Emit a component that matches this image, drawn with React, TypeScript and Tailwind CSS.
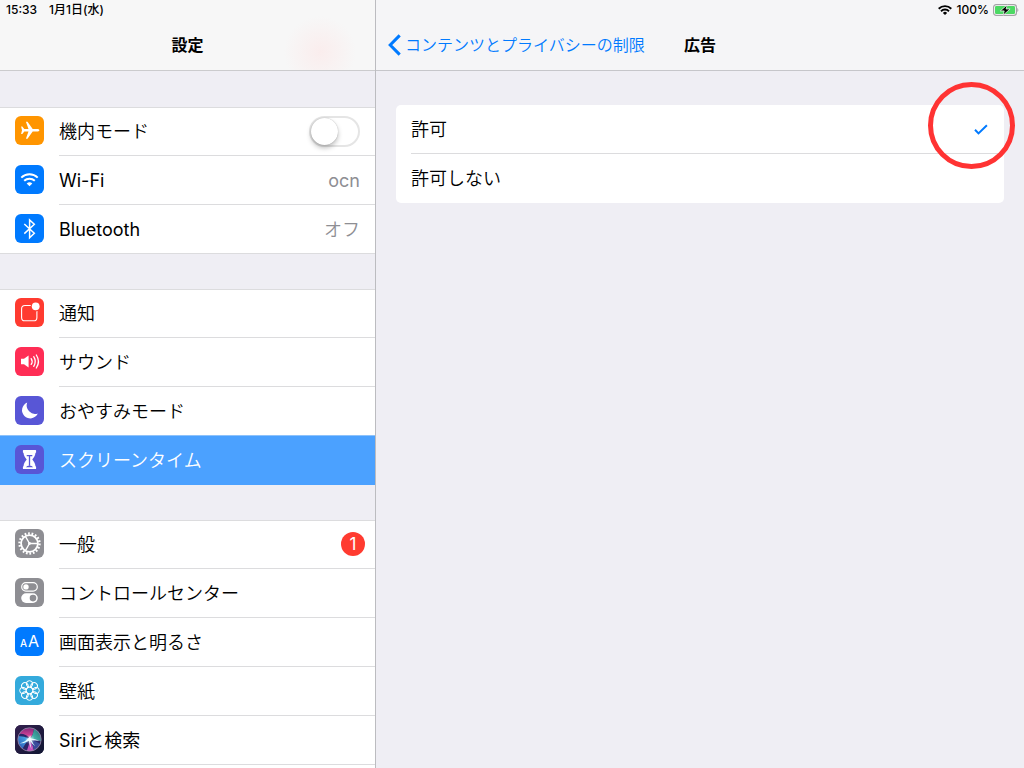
import { useState } from 'react';
import type { ReactNode } from 'react';

interface SettingItem {
  id: string;
  label: string;
  color: string;
  icon: ReactNode;
  value?: string;
  badge?: number;
  toggle?: boolean;
}

const PlaneIcon = () => (
  <svg viewBox="0 0 29 29" className="size-full" fill="#fff">
    <path d="M24.4 14.2c0 .8-1.2 1.3-2.5 1.3h-4.2l-5.2 7.2h-1.6l2.6-7.2H9.3l-2 2.5H6.1l.9-3.8-.9-3.8h1.2l2 2.5h4.2l-2.6-7.2h1.6l5.2 7.2h4.2c1.3 0 2.5.5 2.5 1.3z" />
  </svg>
);

const WifiIcon = () => (
  <svg viewBox="0 0 29 29" className="size-full" fill="none" stroke="#fff" strokeWidth="2">
    <path d="M6.3 12.6a11.8 11.8 0 0 1 16.4 0" />
    <path d="M9.2 15.8a7.8 7.8 0 0 1 10.6 0" />
    <path d="M14.5 21.3l-2.8-2.8a4 4 0 0 1 5.6 0z" fill="#fff" stroke="none" />
  </svg>
);

const BluetoothIcon = () => (
  <svg viewBox="0 0 29 29" className="size-full" fill="none" stroke="#fff" strokeWidth="1.5">
    <path d="M9.3 10l10 9.3-4.7 4.4V5.9l4.7 4.4-10 9.3" />
  </svg>
);

const NotificationIcon = () => (
  <svg viewBox="0 0 29 29" className="size-full">
    <rect x="6.6" y="7.5" width="15.3" height="15.3" rx="3.4" fill="none" stroke="#fff" strokeWidth="1.1" />
    <circle cx="20.7" cy="8.3" r="5.1" fill="#ff3b30" />
    <circle cx="20.7" cy="8.3" r="3.9" fill="#fff" />
  </svg>
);

const SoundIcon = () => (
  <svg viewBox="0 0 29 29" className="size-full" fill="none" stroke="#fff" strokeWidth="1.3" strokeLinecap="round">
    <path d="M6 11.8h3l4.6-3.3v12L9 17.2H6z" fill="#fff" stroke="none" />
    <path d="M16.2 11.6c1.2 1.8 1.2 4 0 5.8" />
    <path d="M18.7 9.7c2 3 2 6.6 0 9.6" />
    <path d="M21.3 8c2.8 4.2 2.8 8.8 0 13" />
  </svg>
);

const MoonIcon = () => (
  <svg viewBox="0 0 29 29" className="size-full" fill="#fff">
    <path d="M12.2 6.6a8.2 8.2 0 1 0 10.6 10.8A8.4 8.4 0 0 1 12.2 6.6z" />
  </svg>
);

const HourglassIcon = () => (
  <svg viewBox="0 0 29 29" className="size-full">
    <path
      d="M8.5 5h12a.6.6 0 0 1 .6.6v1.6a.6.6 0 0 1-.6.6c-.2 3-1.7 4.6-3.2 6.7 1.5 2.1 3 3.7 3.2 6.7a.6.6 0 0 1 .6.6v1.6a.6.6 0 0 1-.6.6h-12a.6.6 0 0 1-.6-.6v-1.6a.6.6 0 0 1 .6-.6c.2-3 1.7-4.6 3.2-6.7-1.5-2.1-3-3.7-3.2-6.7a.6.6 0 0 1-.6-.6V5.6a.6.6 0 0 1 .6-.6z"
      fill="#fff"
    />
    <path d="M11.7 10.6h5.6M14.5 10.6v10.2" stroke="#5856d6" strokeWidth="1.3" />
    <path d="M10.8 22.2q1.200-1.500 3.700-1.800 2.500.3 3.700 1.800z" fill="#5856d6" />
  </svg>
);

const GearIcon = () => (
  <svg viewBox="0 0 29 29" className="size-full" fill="none" stroke="#fff">
    <circle cx="14.5" cy="14.5" r="10" strokeWidth="2.4" strokeDasharray="1.745 1.745" />
    <circle cx="14.5" cy="14.5" r="8.4" strokeWidth="1.8" />
    <path d="M14.5 14.5H23M14.5 14.5l-4.2-7.3M14.5 14.5l-4.2 7.3" strokeWidth="1.4" />
    <circle cx="14.5" cy="14.5" r="1.4" fill="#fff" stroke="none" />
  </svg>
);

const ControlIcon = () => (
  <svg viewBox="0 0 29 29" className="size-full">
    <rect x="6.7" y="4.7" width="15.6" height="8.4" rx="4.2" fill="none" stroke="#fff" strokeWidth="1.2" />
    <circle cx="11" cy="8.9" r="2.7" fill="#fff" />
    <rect x="6.2" y="15.3" width="16.6" height="9.6" rx="4.8" fill="#fff" />
    <circle cx="18" cy="20.1" r="3.3" fill="#8e8e93" />
  </svg>
);

const TextSizeIcon = () => (
  <span className="flex size-full items-baseline justify-center gap-px font-['Inter'] leading-[29px] font-normal text-white">
    <span className="text-[10px] font-medium">A</span>
    <span className="text-[16px]">A</span>
  </span>
);

const FlowerIcon = () => (
  <svg viewBox="0 0 29 29" className="size-full" fill="none" stroke="#fff" strokeWidth="1">
    {[0, 45, 90, 135, 180, 225, 270, 315].map((angle) => (
      <circle key={angle} cx="14.5" cy="7.9" r="3.2" transform={`rotate(${angle} 14.5 14.5)`} />
    ))}
    <circle cx="14.5" cy="14.5" r="3.3" />
  </svg>
);

const SiriIcon = () => (
  <svg viewBox="0 0 29 29" className="size-full">
    <defs>
      <radialGradient id="siriGlow">
        <stop offset="0" stopColor="#fff" />
        <stop offset=".3" stopColor="#fff" stopOpacity=".5" />
        <stop offset="1" stopColor="#fff" stopOpacity="0" />
      </radialGradient>
      <linearGradient id="siriBg" x1="0" y1="0" x2="1" y2="1">
        <stop offset="0" stopColor="#33204f" />
        <stop offset="1" stopColor="#101632" />
      </linearGradient>
      <linearGradient id="siriPink" x1="0" y1="0" x2="0" y2="1">
        <stop offset="0" stopColor="#7a2678" />
        <stop offset="1" stopColor="#f04ea0" />
      </linearGradient>
      <linearGradient id="siriTeal" x1="1" y1="0" x2="0" y2="1">
        <stop offset="0" stopColor="#1d5560" />
        <stop offset="1" stopColor="#52d8c8" />
      </linearGradient>
      <linearGradient id="siriBlue" x1="0" y1="1" x2="1" y2="0">
        <stop offset="0" stopColor="#2448b0" />
        <stop offset="1" stopColor="#4fc0f0" />
      </linearGradient>
      <clipPath id="siriOrb">
        <circle cx="14.5" cy="14.5" r="11.5" />
      </clipPath>
    </defs>
    <rect width="29" height="29" fill="url(#siriBg)" />
    <g clipPath="url(#siriOrb)">
      <rect width="29" height="29" fill="#2a2668" />
      <path d="M15 13.500Q10 8 4 9l4-7h11q0 7-4 11.500z" fill="url(#siriPink)" />
      <path d="M15 14q4-5 4-12l10 8v8q-6-4-14-4z" fill="url(#siriTeal)" />
      <path d="M15 14Q9 11 2 11v6l5 8q3-7 8-11z" fill="url(#siriBlue)" />
      <path d="M15 14q-1 7-4 14h8q0-7-4-14z" fill="#c050b8" />
      <path d="M15 14l5 13 7-7q-6-4-12-6z" fill="#3a4c9c" />
    </g>
    <path
      d="M4.500 18.500q7-2 11-8-.5 2.500 1 3 4 .3 8 2.500-4-.8-8-.8 1.500 3.500 4 6-3.500-2-5.500-5.500.8 4.500 1.500 8.500-2.200-4-2.500-8.500-4.500 2.800-9.500 2.800z"
      fill="#d9f8ff"
    />
    <circle cx="15" cy="14.5" r="5" fill="url(#siriGlow)" />
    <circle cx="14.5" cy="14.5" r="11.7" fill="none" stroke="#9c8cae" strokeWidth=".8" />
  </svg>
);

const groups: SettingItem[][] = [
  [
    { id: 'airplane', label: '機内モード', color: 'bg-[#ff9500]', icon: <PlaneIcon />, toggle: true },
    { id: 'wifi', label: 'Wi-Fi', color: 'bg-[#007aff]', icon: <WifiIcon />, value: 'ocn' },
    { id: 'bluetooth', label: 'Bluetooth', color: 'bg-[#007aff]', icon: <BluetoothIcon />, value: 'オフ' },
  ],
  [
    { id: 'notifications', label: '通知', color: 'bg-[#ff3b30]', icon: <NotificationIcon /> },
    { id: 'sound', label: 'サウンド', color: 'bg-[#ff2d55]', icon: <SoundIcon /> },
    { id: 'dnd', label: 'おやすみモード', color: 'bg-[#5856d6]', icon: <MoonIcon /> },
    { id: 'screentime', label: 'スクリーンタイム', color: 'bg-[#5856d6]', icon: <HourglassIcon /> },
  ],
  [
    { id: 'general', label: '一般', color: 'bg-[#8e8e93]', icon: <GearIcon />, badge: 1 },
    { id: 'control', label: 'コントロールセンター', color: 'bg-[#8e8e93]', icon: <ControlIcon /> },
    { id: 'display', label: '画面表示と明るさ', color: 'bg-[#007aff]', icon: <TextSizeIcon /> },
    { id: 'wallpaper', label: '壁紙', color: 'bg-[#34aadc]', icon: <FlowerIcon /> },
    { id: 'siri', label: 'Siriと検索', color: 'bg-[#1b1638]', icon: <SiriIcon /> },
  ],
];

const options = ['許可', '許可しない'];

// Latin text looks thin next to the kana, so it gets the regular weight
const weightFor = (text: string) => (/^[A-Za-z]/.test(text) ? 'font-normal' : '');

interface RowProps {
  item: SettingItem;
  selected: boolean;
  onSelect: (id: string) => void;
}

function SettingRow({ item, selected, onSelect }: RowProps) {
  const [on, setOn] = useState(false);

  const icon = (
    <span className={`mt-[9px] size-[29px] shrink-0 self-start overflow-hidden rounded-md ${item.color}`}>
      {item.icon}
    </span>
  );
  const lineClass = selected ? 'border-[#4ba1ff]' : 'border-[#dcdcde]';

  if (item.toggle) {
    return (
      <li className="flex h-[49px] items-center gap-[15px] pl-[15px]">
        {icon}
        <label className={`flex h-full flex-1 items-center justify-between border-b pr-[15px] ${lineClass}`}>
          {item.label}
          <input
            type="checkbox"
            role="switch"
            checked={on}
            onChange={(e) => setOn(e.target.checked)}
            className="h-[31px] w-[51px] appearance-none rounded-full border-2 border-[#e5e5e5] bg-white transition before:block before:size-[27px] before:rounded-full before:bg-white before:shadow-[0_3px_5px_rgba(0,0,0,0.25),0_0_1px_rgba(0,0,0,0.3)] before:transition checked:border-[#4cd964] checked:bg-[#4cd964] checked:before:translate-x-5"
          />
        </label>
      </li>
    );
  }

  return (
    <li>
      <button
        type="button"
        onClick={() => onSelect(item.id)}
        className={`flex h-[49px] w-full items-center gap-[15px] pl-[15px] text-left ${
          selected ? 'relative bg-[#4ba1ff] text-white shadow-[0_-1px_0_#8dc2fb]' : ''
        }`}
      >
        {icon}
        <span className={`flex h-full flex-1 items-center justify-between border-b ${lineClass}`}>
          <span className={weightFor(item.label)}>{item.label}</span>
          {item.value && (
            <span className={`pr-[15px] text-[#8e8e93] ${weightFor(item.value)}`}>{item.value}</span>
          )}
          {item.badge && (
            <span className="mr-[10px] flex size-6 items-center justify-center rounded-full bg-[#ff3b30] text-[17px] leading-6 font-normal text-white">
              {item.badge}
            </span>
          )}
        </span>
      </button>
    </li>
  );
}

export default function App() {
  const [current, setCurrent] = useState('screentime');
  const [choice, setChoice] = useState('許可');

  return (
    <div className="flex h-screen overflow-hidden bg-[#efeef4] font-['Inter','Noto_Sans_CJK_JP',sans-serif] text-[18px] font-[350] text-black">
      {/* Sidebar */}
      <aside className="flex w-[376px] shrink-0 flex-col border-r border-[#bcbcc0]">
        <header className="h-[71px] shrink-0 border-b border-[#cbcbcd] bg-[#f7f7f7] bg-[radial-gradient(circle_at_320px_52px,#faeded_0,#f7f7f7_36px)]">
          <div className="flex h-5 items-center gap-3 pl-[6px] text-[12px] font-medium">
            <span>15:33</span>
            <span>1月1日(水)</span>
          </div>
          <h1 className="flex h-[50px] items-center justify-center text-[16px] font-bold">設定</h1>
        </header>
        <nav className="flex flex-1 flex-col gap-[35px] overflow-hidden pt-9">
          {groups.map((group, idx) => (
            <ul
              key={idx}
              className="shrink-0 bg-white shadow-[inset_0_1px_0_#dcdcde,inset_0_-1px_0_#dcdcde] last:grow last:shadow-[inset_0_1px_0_#dcdcde]"
            >
              {group.map((item) => (
                <SettingRow key={item.id} item={item} selected={item.id === current} onSelect={setCurrent} />
              ))}
            </ul>
          ))}
        </nav>
      </aside>

      {/* Detail */}
      <main className="min-w-0 flex-1">
        <header className="h-[71px] border-b border-[#c6c6ca] bg-[#f5f5f7]">
          <div className="flex h-5 items-center justify-end pr-[5px] text-[12px] font-medium">
            <svg viewBox="0 0 14 10" className="mr-[5px] h-[10px] w-[14px]" fill="none" stroke="#000" strokeWidth="1.9">
              <path d="M.7 3.7a9 9 0 0 1 12.6 0" />
              <path d="M3 6.2a5.7 5.7 0 0 1 8 0" />
              <path d="M7 10L4.9 7.9a3 3 0 0 1 4.2 0z" fill="#000" stroke="none" />
            </svg>
            <span>100%</span>
            <svg viewBox="0 0 26 12" className="ml-1 h-3 w-[26px]">
              <rect x=".6" y=".6" width="22.8" height="10.8" rx="2.6" fill="#fff" stroke="#a3a3a6" strokeWidth="1.2" />
              <rect x="2" y="2" width="20" height="8" rx="1.2" fill="#4cd964" />
              <path d="M24.3 4c1.4.5 1.4 3.5 0 4z" fill="#a3a3a6" />
              <path d="M14.2.9L7.3 6.9h3.9l-1.1 4.3 7-6.2h-4z" fill="#000" stroke="#fff" strokeWidth=".7" />
            </svg>
          </div>
          <div className="grid h-[50px] grid-cols-[1fr_auto_1fr] items-center pl-3 text-[16px]">
            <button type="button" className="flex items-center gap-1 whitespace-nowrap text-[#007aff]">
              <svg viewBox="0 0 13 22" className="h-[22px] w-[13px]" fill="none" stroke="#007aff" strokeWidth="3">
                <path d="M11.7 1.4L2.2 11l9.5 9.6" />
              </svg>
              コンテンツとプライバシーの制限
            </button>
            <h2 className="pr-3 font-bold">広告</h2>
          </div>
        </header>

        <section className="relative mx-5 mt-[34px]">
          <div role="radiogroup" aria-label="広告" className="rounded-[5px] bg-white pl-[15px]">
            {options.map((option) => (
              <label
                key={option}
                className="flex h-[49px] items-center justify-between border-b border-[#dcdcde] pr-4 last:border-transparent"
              >
                {option}
                <input
                  type="radio"
                  name="ads"
                  checked={choice === option}
                  onChange={() => setChoice(option)}
                  className="peer size-0 appearance-none"
                />
                <svg
                  viewBox="0 0 14 11"
                  className="hidden h-[11px] w-[14px] peer-checked:block"
                  fill="none"
                  stroke="#007aff"
                  strokeWidth="2"
                >
                  <path d="M1 5.8l3.5 3.6L12.9 1.2" />
                </svg>
              </label>
            ))}
          </div>
          {/* Callout ring around the check mark */}
          <span className="pointer-events-none absolute -top-[23px] -right-[11px] size-[87px] rounded-full border-[5px] border-[#ff3333]" />
        </section>
      </main>
    </div>
  );
}
